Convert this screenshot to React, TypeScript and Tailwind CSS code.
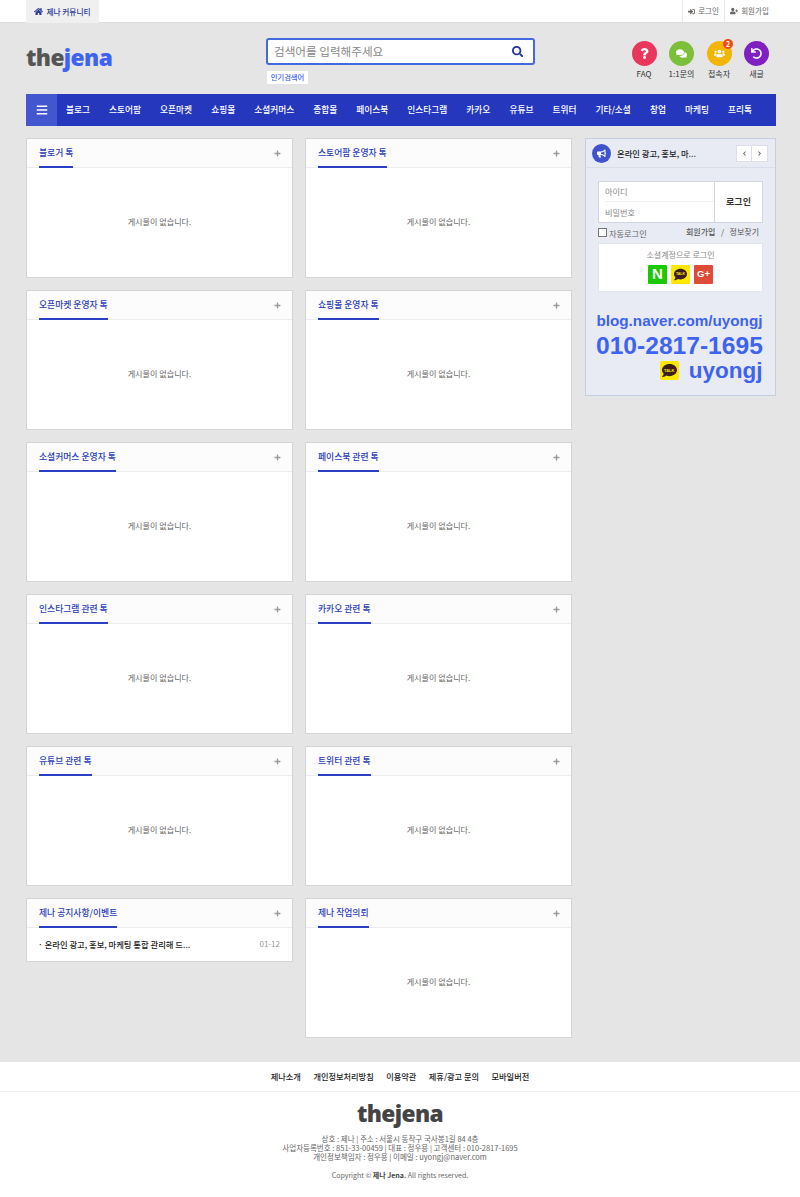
import React from "react";
import { FaHome, FaSignInAlt, FaUserPlus, FaSearch, FaQuestion, FaComments, FaUsers, FaUndo, FaBullhorn, FaPlus, FaBars, FaChevronLeft, FaChevronRight, FaComment } from "react-icons/fa";

const navItems = ["블로그","스토어팜","오픈마켓","쇼핑몰","소셜커머스","종합몰","페이스북","인스타그램","카카오","유튜브","트위터","기타/소셜","창업","마케팅","프리톡"];

const rows: [string, string][] = [
  ["블로거 톡","스토어팜 운영자 톡"],
  ["오픈마켓 운영자 톡","쇼핑몰 운영자 톡"],
  ["소셜커머스 운영자 톡","페이스북 관련 톡"],
  ["인스타그램 관련 톡","카카오 관련 톡"],
  ["유튜브 관련 톡","트위터 관련 톡"],
];

function CardHead({ title }: { title: string }) {
  return (
    <div className="h-[29px] bg-[#fcfcfc] border-b border-[#ececec] flex justify-between pl-[12px] pr-[11px]">
      <span className="h-[29px] border-b-2 border-[#2b3fc4] text-[8.8px] leading-[27px] font-medium text-[#2b3cb8]">{title}</span>
      <FaPlus className="text-[#999] text-[7px] mt-[11px]" />
    </div>
  );
}

function Card({ title }: { title: string }) {
  return (
    <div className="h-[140px] bg-white border border-[#d4d4d4] box-border flex flex-col">
      <CardHead title={title} />
      <div className="flex-1 flex items-center justify-center text-[8.1px] text-[#666] pb-[1px]">게시물이 없습니다.</div>
    </div>
  );
}

function RoundIcon({ color, label, children, badge }: { color: string; label: string; children: React.ReactNode; badge?: boolean }) {
  return (
    <div className="w-[26px] flex flex-col items-center relative">
      <div className={`w-[25px] h-[25px] rounded-full flex items-center justify-center text-white text-[11px] ${color}`}>{children}</div>
      {badge && <span className="absolute -top-[2px] right-[-1px] w-[10px] h-[10px] rounded-full bg-[#f04a12] text-white text-[7px] font-bold leading-[10px] text-center">2</span>}
      <span className="text-[8px] leading-[10px] mt-[3px] text-[#333] whitespace-nowrap">{label}</span>
    </div>
  );
}

function KakaoMark({ size, text }: { size: string; text: string }) {
  return (
    <span className={`relative flex items-center justify-center text-[#3c1e1e] ${size}`}>
      <FaComment />
      <span className={`absolute inset-0 flex items-center justify-center font-bold text-[#ffe800] ${text}`} style={{ fontFamily: '"Liberation Sans",sans-serif' }}>TALK</span>
    </span>
  );
}

export default function App() {
  return (
    <div className="w-[800px] h-[1197px] bg-[#e5e5e5] flex flex-col text-[#333]" style={{ fontFamily: '"Noto Sans CJK KR","Noto Sans",sans-serif' }}>
      {/* top bar */}
      <div className="h-[23px] bg-white border-b border-[#dedede] flex justify-between pl-[26px] pr-[26px]">
        <div className="h-[23px] w-[73px] bg-[#f0f0f0] flex items-center justify-center gap-[3px] text-[7.7px] font-medium text-[#2b3a9c]">
          <FaHome className="text-[9px]" /><span>제나 커뮤니티</span>
        </div>
        <div className="flex h-[22px] text-[7.5px] text-[#666]">
          <div className="w-[42px] border-l border-[#e8e8e8] flex items-center justify-center gap-[3px]"><FaSignInAlt className="text-[7px]" />로그인</div>
          <div className="w-[50px] border-l border-[#e8e8e8] flex items-center justify-center gap-[3px]"><FaUserPlus className="text-[8px]" />회원가입</div>
        </div>
      </div>

      {/* header */}
      <div className="h-[71px] flex pl-[26px] relative">
        <div className="w-[240px] pt-[17px] text-[22.7px] leading-[36px] font-extrabold tracking-[-0.6px]" style={{ fontFamily: '"Open Sans",sans-serif' }}>
          <span className="text-[#555]">the</span><span className="text-[#3d63f0]">jena</span>
        </div>
        <div className="pt-[15px]">
          <div className="w-[269px] h-[27px] bg-white border-2 border-[#4568e0] rounded-[3px] flex items-center justify-between pl-[6px] pr-[10px]">
            <span className="text-[11.6px] text-[#888]">검색어를 입력해주세요</span>
            <FaSearch className="text-[#23389f] text-[11.5px]" />
          </div>
          <div className="mt-[6px] ml-[1px] w-[41px] h-[13px] bg-white text-[7.3px] font-medium leading-[13px] text-center text-[#3d63f0]">인기검색어</div>
        </div>
        <div className="flex gap-[11.5px] ml-[96px] pt-[18px]">
          <RoundIcon color="bg-[#e8365d]" label="FAQ"><FaQuestion /></RoundIcon>
          <RoundIcon color="bg-[#7cbf3a]" label="1:1문의"><FaComments /></RoundIcon>
          <RoundIcon color="bg-[#f2b500]" label="접속자" badge><FaUsers /></RoundIcon>
          <RoundIcon color="bg-[#8020c0]" label="새글"><FaUndo /></RoundIcon>
        </div>
      </div>

      {/* nav */}
      <div className="ml-[26px] w-[750px] h-[32px] bg-[#2538bd] flex items-center text-white">
        <div className="w-[31px] h-[32px] bg-[#4257cf] flex items-center justify-center text-[12px]"><FaBars /></div>
        <div className="flex gap-[19.07px] pl-[9px] text-[8.7px] font-medium whitespace-nowrap">
          {navItems.map((n) => <span key={n}>{n}</span>)}
        </div>
      </div>

      {/* content */}
      <div className="flex pl-[26px] pt-[12px] flex-1">
        <div className="grid grid-cols-[267px_267px] gap-x-[12px] gap-y-[12px] content-start">
          {rows.flat().map((t) => <Card key={t} title={t} />)}
          <div className="h-[64px] bg-white border border-[#d4d4d4] flex flex-col">
            <CardHead title="제나 공지사항/이벤트" />
            <div className="flex-1 flex justify-between items-center pl-[11px] pr-[12px] pb-[1px]">
              <span className="text-[8.3px] font-medium text-[#222]">· 온라인 광고, 홍보, 마케팅 통합 관리해 드...</span>
              <span className="text-[8px] text-[#999]">01-12</span>
            </div>
          </div>
          <Card title="제나 작업의뢰" />
        </div>
        <aside className="ml-[13px] w-[191px] h-[258px] bg-[#e8ebf4] border border-[#c5cfdf]">
          <div className="h-[29px] border-b border-[#d8dde8] flex items-center pl-[6px] pr-[7px]">
            <div className="w-[19px] h-[19px] rounded-full bg-[#3f54cc] flex items-center justify-center text-white text-[9px]"><FaBullhorn /></div>
            <span className="ml-[6px] flex-1 text-[8.3px] font-medium text-[#222]">온라인 광고, 홍보, 마...</span>
            <div className="flex bg-white border border-[#dde]">
              <span className="w-[15px] h-[15px] flex items-center justify-center text-[5px] text-[#555] border-r border-[#dde]"><FaChevronLeft /></span>
              <span className="w-[15px] h-[15px] flex items-center justify-center text-[5px] text-[#555]"><FaChevronRight /></span>
            </div>
          </div>
          <div className="px-[12px] pt-[13px]">
            <div className="h-[42px] bg-white border border-[#d0d5e0] flex">
              <div className="flex-1 flex flex-col text-[8.2px] text-[#888] pl-[6px]">
                <div className="h-[20px] flex items-center border-b border-[#f0f0f0]">아이디</div>
                <div className="h-[20px] flex items-center">비밀번호</div>
              </div>
              <div className="w-[48px] border-l border-[#d0d5e0] flex items-center justify-center text-[9px] font-bold text-[#333]">로그인</div>
            </div>
            <div className="flex justify-between items-center h-[20px] pr-[4px]">
              <label className="flex items-center gap-[2px] text-[8.2px] text-[#666]"><span className="w-[9px] h-[9px] bg-white border border-[#777] inline-block" />자동로그인</label>
              <span className="flex gap-[5.5px] text-[8px] text-[#555] -mt-[2px]"><span className="font-medium">회원가입</span><span>/</span><span>정보찾기</span></span>
            </div>
            <div className="h-[49px] bg-white border border-[#e0e4ee] flex flex-col items-center pt-[4px]">
              <span className="text-[8px] text-[#888] leading-[14px]">소셜계정으로 로그인</span>
              <div className="flex gap-[4px] mt-[3px]">
                <span className="w-[19px] h-[19px] bg-[#1ec800] rounded-[1px] flex items-center justify-center text-white text-[15px] font-black" style={{ fontFamily: '"Liberation Sans",sans-serif' }}>N</span>
                <span className="w-[19px] h-[19px] bg-[#ffe800] rounded-[1px] flex items-center justify-center"><KakaoMark size="text-[13px]" text="text-[3.5px]" /></span>
                <span className="w-[19px] h-[19px] bg-[#dd4b39] rounded-[1px] flex items-center justify-center text-white text-[9.5px] font-bold" style={{ fontFamily: '"Liberation Sans",sans-serif' }}>G+</span>
              </div>
            </div>
          </div>
          <div className="pl-[10px] pr-[12.5px] pt-[19px] text-[#3d63f0] font-bold text-right" style={{ fontFamily: '"Liberation Sans",sans-serif' }}>
            <div className="text-[15.25px] leading-[19px] whitespace-nowrap">blog.naver.com/uyongj</div>
            <div className="text-[24.6px] leading-[29px] mt-[1px] whitespace-nowrap">010-2817-1695</div>
            <div className="flex justify-end items-center gap-[10px] text-[22.5px] leading-[21px]">
              <span className="w-[19px] h-[19px] bg-[#ffe800] rounded-[2px] flex items-center justify-center"><KakaoMark size="text-[15px]" text="text-[4px]" /></span>
              uyongj
            </div>
          </div>
        </aside>
      </div>

      {/* footer */}
      <footer className="h-[135px] bg-white flex flex-col items-center">
        <div className="w-full h-[30px] border-b border-[#eee] flex items-center justify-center gap-[12.5px] text-[8.2px] font-medium text-[#222]">
          <span>제나소개</span><span>개인정보처리방침</span><span>이용약관</span><span>제휴/광고 문의</span><span>모바일버전</span>
        </div>
        <div className="text-[22.7px] leading-[32px] mt-[6px] font-extrabold text-[#444] tracking-[-0.6px]" style={{ fontFamily: '"Open Sans",sans-serif' }}>thejena</div>
        <div className="text-[7.5px] leading-[9.2px] mt-[4px] text-[#666] text-center">
          <div>상호 : 제나 | 주소 : 서울시 동작구 국사봉1길 84 4층</div>
          <div>사업자등록번호 : 851-33-00459 | 대표 : 정우용 | 고객센터 : 010-2817-1695</div>
          <div>개인정보책임자 : 정우용 | 이메일 : uyongj@naver.com</div>
        </div>
        <div className="text-[7px] text-[#666] mt-[8px]">Copyright © <b className="text-[#444]">제나 Jena.</b> All rights reserved.</div>
      </footer>
    </div>
  );
}
